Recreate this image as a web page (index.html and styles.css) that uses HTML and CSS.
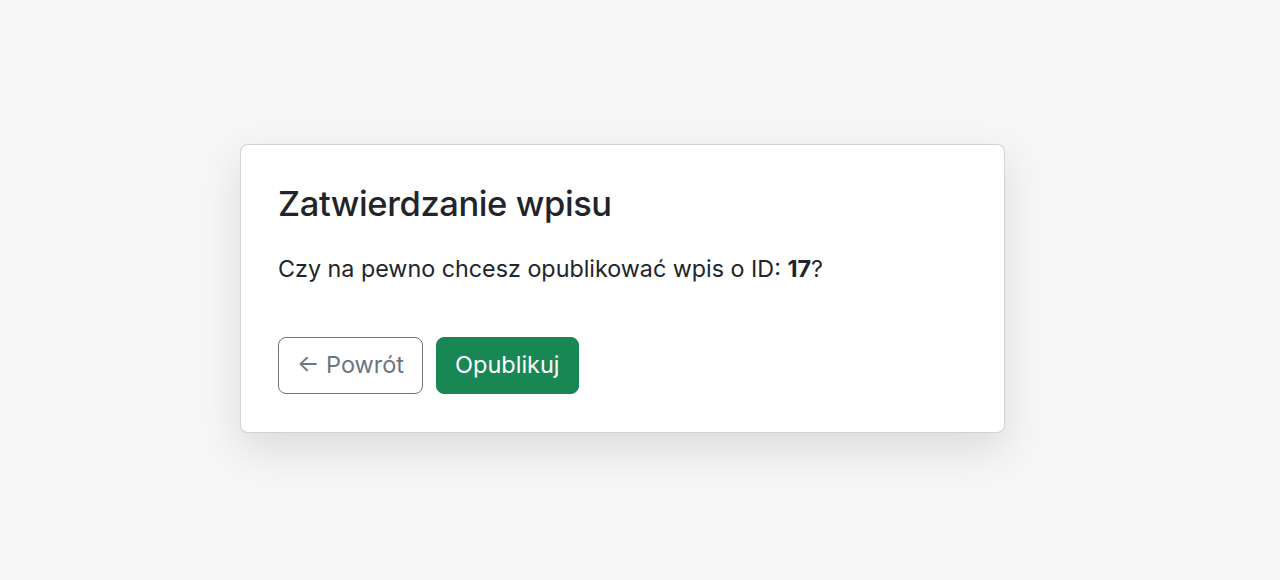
FILE: index.html
```html
<!DOCTYPE html>
<html lang="pl">
<head>
    <meta charset="UTF-8">
    <meta name="viewport" content="width=device-width, initial-scale=1.0">
    <title>Zatwierdzanie wpisu</title>
    <link rel="stylesheet" href="styles.css">
</head>
<body>
    <div class="page">
        <div class="card">
            <h2 class="card-title">Zatwierdzanie wpisu</h2>
            <p class="card-text">Czy na pewno chcesz opublikować wpis o ID: <strong>17</strong>?</p>

            <div class="actions">
                <a href="#" class="btn btn-outline">&larr; Powrót</a>
                <button type="submit" class="btn btn-success">Opublikuj</button>
            </div>
        </div>
    </div>
</body>
</html>
```

FILE: styles.css
```css
html, body {
    margin: 0;
    height: 100%;
}
body {
    font-family: Inter, "Liberation Sans", sans-serif;
    font-size: 19.2px;
    line-height: 1.5;
    color: #212529;
    background: #f6f6f6;
}
.page {
    height: 100%;
    display: flex;
    align-items: center;
    padding: 0 0 3px 240px;
    box-sizing: border-box;
}
.card {
    width: 765px;
    box-sizing: border-box;
    background: #fff;
    border: 1px solid rgba(0,0,0,0.175);
    border-radius: 8px;
    padding: 38px 37px;
    box-shadow: 0 16px 40px rgba(0,0,0,0.11);
}
.card-title {
    margin: 0 0 27px;
    font-size: 34.5px;
    font-weight: 500;
    line-height: 1.2;
    letter-spacing: -0.4px;
}
.card-text {
    margin: 0 0 50px;
    font-size: 23.3px;
}
.card-text strong {
    font-weight: 700;
}
.actions {
    display: flex;
    gap: 13px;
}
.btn {
    display: inline-block;
    font-family: inherit;
    font-size: 23.5px;
    line-height: 36px;
    padding: 9.5px 18px;
    border-radius: 8px;
    border: 1px solid transparent;
    text-decoration: none;
    cursor: pointer;
}
.btn-outline {
    color: #6c757d;
    border-color: #6c757d;
    background: #fff;
}
.btn-success {
    color: #fff;
    background: #198754;
    border-color: #198754;
}
```
